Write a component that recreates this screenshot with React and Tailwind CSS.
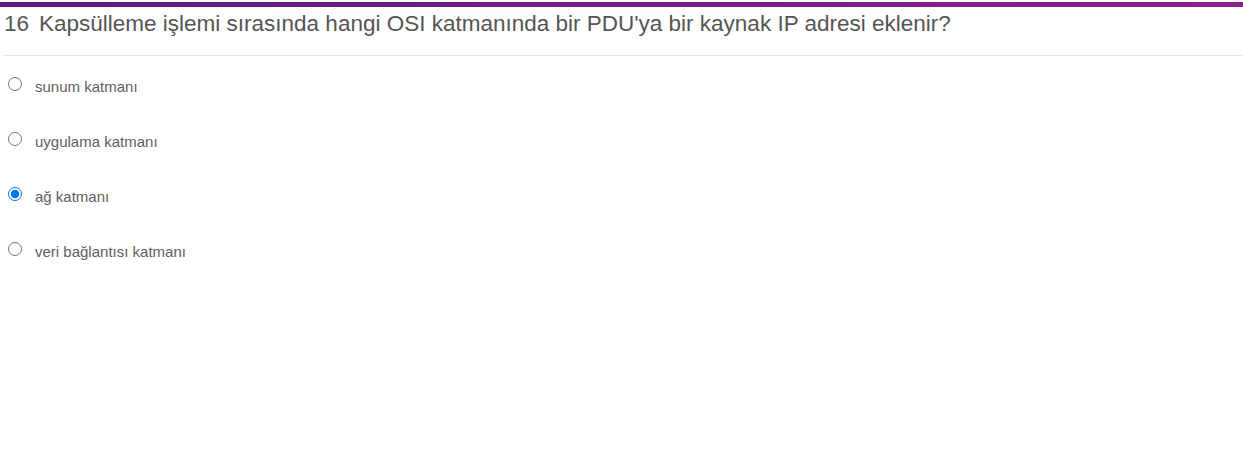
import { useState } from 'react';

const options = [
  'sunum katmanı',
  'uygulama katmanı',
  'ağ katmanı',
  'veri bağlantısı katmanı',
];

const App = () => {
  const [selected, setSelected] = useState(2);

  return (
    <div className="min-h-screen bg-white" style={{ fontFamily: '"Liberation Sans", Arial, sans-serif' }}>
      {/* Top bar */}
      <div className="pt-[2px]">
        <div className="h-[5px] bg-gradient-to-r from-[#5e1a7c] to-[#8b1f8f]" />
      </div>

      {/* Question */}
      <div className="ml-[3px] border-b border-[#e6e6e6] h-[49px] flex items-center">
        <h1 className="flex items-baseline text-[22.5px] leading-[28px] text-[#555555] pl-[1px] -mt-[14px]">
          <span className="w-[35px]">16</span>
          <span>Kapsülleme işlemi sırasında hangi OSI katmanında bir PDU'ya bir kaynak IP adresi eklenir?</span>
        </h1>
      </div>

      {/* Options */}
      <div>
        {options.map((opt, i) => (
          <label key={opt} className="flex items-center h-[55px] cursor-pointer">
            <span className="w-[30px] flex justify-center items-center">
              <input
                type="radio"
                name="q16"
                checked={selected === i}
                onChange={() => setSelected(i)}
                className="m-0 w-[14px] h-[14px] ml-[-1px]"
              />
            </span>
            <span className="text-[15px] text-[#606060] ml-[5px] mt-[7px]">{opt}</span>
          </label>
        ))}
      </div>
    </div>
  );
};

export default App;
